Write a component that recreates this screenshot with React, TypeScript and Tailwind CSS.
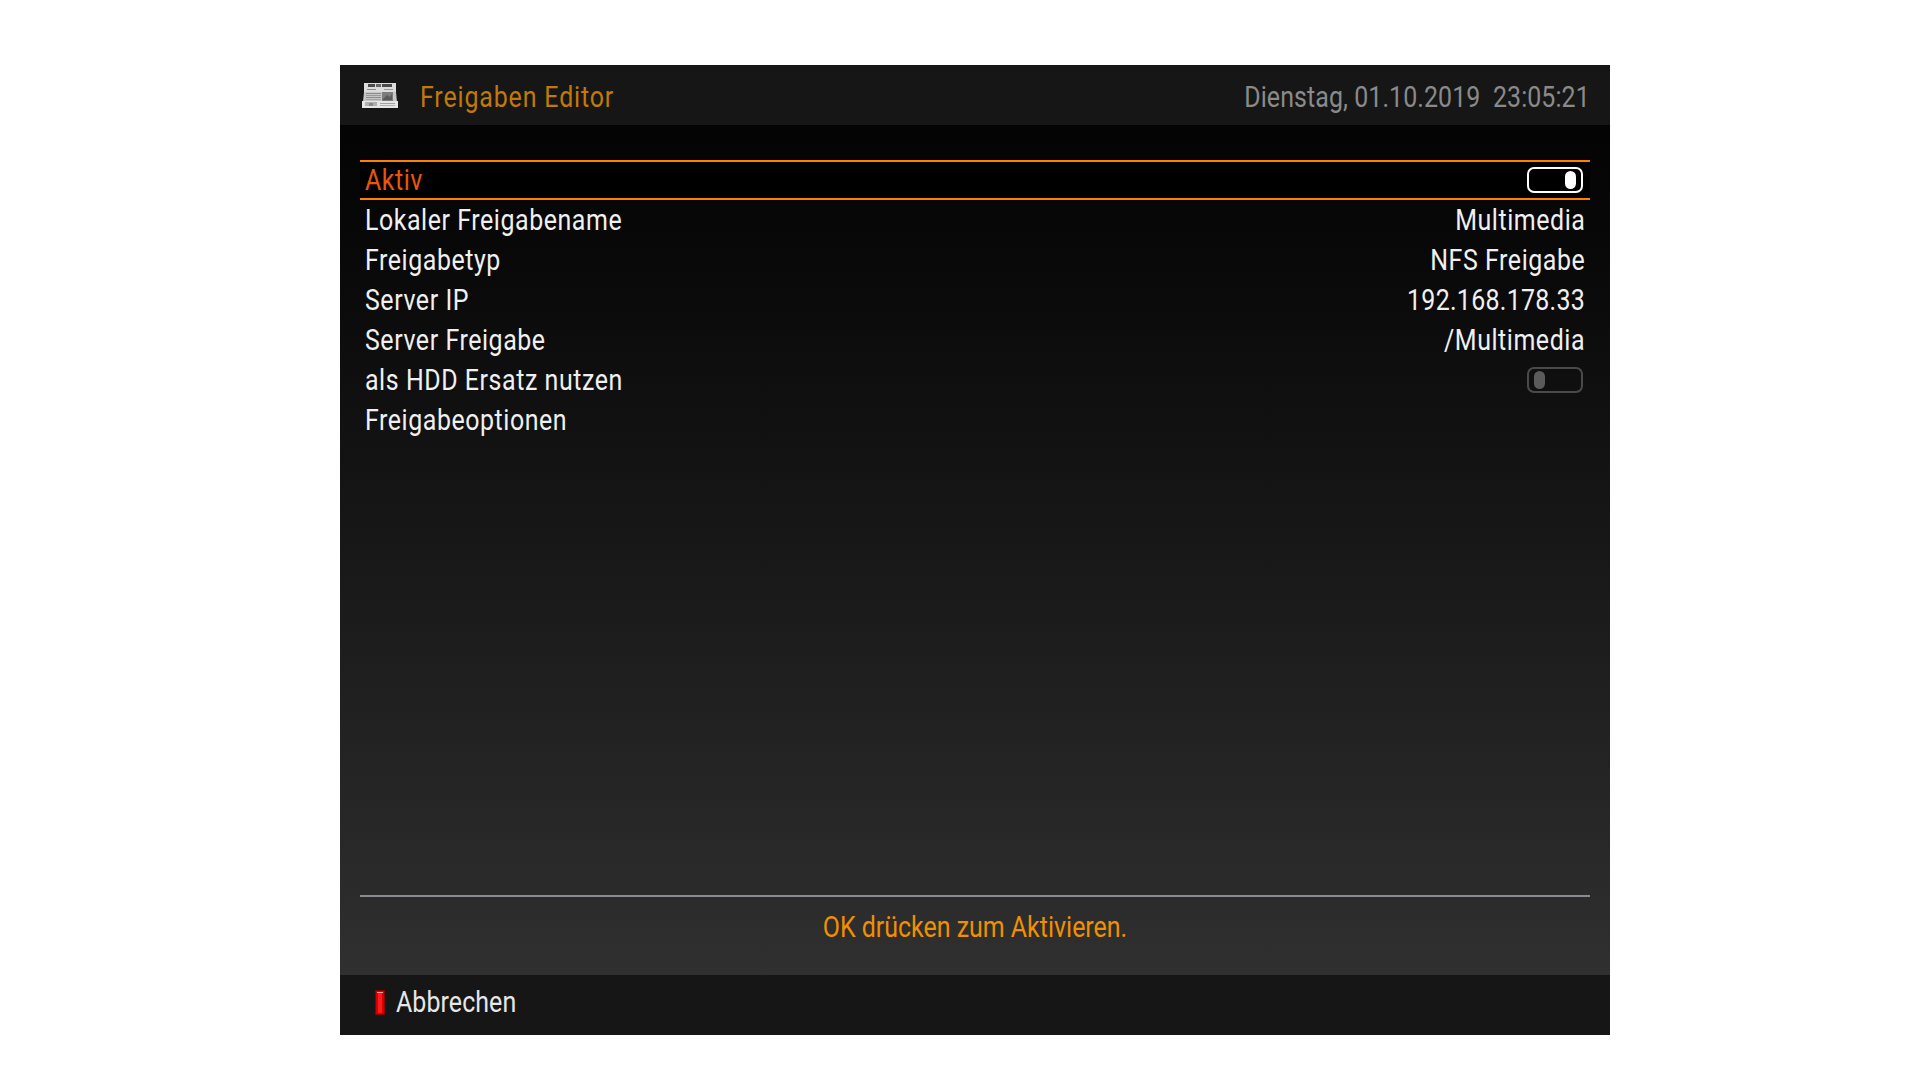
const font = "font-['Roboto',sans-serif]";

function Toggle({ on }: { on: boolean }) {
  return (
    <div className={`box-border flex h-[26px] w-[56px] items-center rounded-[7px] border-2 px-[5px] ${on ? "justify-end border-white" : "justify-start border-[#4a4a4a]"}`}>
      <div className={`h-[18px] w-[11px] rounded-[6px] ${on ? "bg-white" : "bg-[#5a5a5a]"}`} />
    </div>
  );
}

function Narrow({ children, right, className = "" }: { children: React.ReactNode; right?: boolean; className?: string }) {
  return (
    <span className={`inline-block whitespace-nowrap scale-x-[0.86] ${right ? "origin-right" : "origin-left"} ${className}`}>{children}</span>
  );
}

function Row({ label, value, toggle, active, tight }: { label: string; value?: string; toggle?: "on" | "off"; active?: boolean; tight?: boolean }) {
  return (
    <div className={`box-border flex h-[40px] items-center justify-between pl-[5px] ${toggle ? "pr-[7px]" : "pr-[5px]"} ${active ? "border-y-2 border-[#ff7f00] bg-black text-[#e8560a]" : "text-[#f0f0f0]"}`}>
      <Narrow className="translate-y-[1px]">{label}</Narrow>
      {value && <Narrow right className={`translate-y-[1px] ${tight ? "tracking-[0.35px]" : ""}`}>{value}</Narrow>}
      {toggle && <Toggle on={toggle === "on"} />}
    </div>
  );
}

function Paper() {
  return (
    <svg width="36" height="25" viewBox="0 0 36 25" className="block">
      <rect x="2" y="0" width="32" height="9" fill="#dcdcdc" />
      <rect x="6" y="1" width="7" height="3" fill="#4a4a4a" />
      <rect x="14" y="1" width="5" height="3" fill="#666" />
      <rect x="20" y="1" width="10" height="3" fill="#4a4a4a" />
      <rect x="5" y="6" width="9" height="1" fill="#888" />
      <rect x="22" y="6" width="9" height="1" fill="#999" />
      <polygon points="2,9 34,9 35,19 1,19" fill="#c6c6c6" />
      <rect x="4" y="10" width="15" height="1" fill="#8c8c8c" />
      <rect x="4" y="12" width="15" height="1" fill="#9a9a9a" />
      <rect x="4" y="14" width="15" height="1" fill="#8c8c8c" />
      <rect x="4" y="16" width="15" height="1" fill="#a4a4a4" />
      <rect x="20" y="9" width="11" height="9" fill="#7c7c7c" />
      <polygon points="21,16 25,12 28,14 30,11 30,17 21,17" fill="#5a5a5a" />
      <rect x="0" y="18" width="36" height="7" fill="#e6e6e6" />
      <rect x="3" y="19" width="12" height="4" fill="#b0b0b0" />
      <rect x="7" y="20" width="4" height="3" fill="#8a8a8a" />
      <rect x="18" y="20" width="15" height="1" fill="#a0a0a0" />
      <rect x="18" y="22" width="15" height="1" fill="#b0b0b0" />
    </svg>
  );
}

function RedKey() {
  return (
    <svg width="10" height="25" viewBox="0 0 10 25" className="block">
      <rect width="10" height="25" fill="#8a0000" />
      <rect x="1" y="1" width="8" height="23" fill="#d40000" />
      <rect x="3" y="2" width="4" height="21" fill="#ff1a1a" />
      <rect x="2" y="2" width="6" height="1" fill="#ff9a9a" />
    </svg>
  );
}

export default function App() {
  return (
    <div className={`flex h-[1080px] w-[1920px] justify-start bg-white pl-[340px] pt-[65px] ${font}`}>
      <div className="flex h-[970px] w-[1270px] flex-col text-[29px]">
        <header className="flex h-[60px] items-center justify-between bg-[#161616] pl-[22px] pr-[20px]">
          <div className="flex items-center gap-[22px]">
            <Paper />
            <Narrow className="translate-y-[2.5px] tracking-[1px] text-[#c0790a]">Freigaben Editor</Narrow>
          </div>
          <Narrow right className="translate-y-[2.5px] tracking-[0.1px] text-[#8a8a8a]">Dienstag, 01.10.2019&nbsp;&nbsp;23:05:21</Narrow>
        </header>
        <main className="flex flex-1 flex-col bg-gradient-to-b from-[#040404] to-[#303030] px-[20px] pt-[35px] tracking-[0.65px]">
          <div className="flex-1">
            <Row label="Aktiv" toggle="on" active />
            <Row label="Lokaler Freigabename" value="Multimedia" />
            <Row label="Freigabetyp" value="NFS Freigabe" />
            <Row label="Server IP" value="192.168.178.33" tight />
            <Row label="Server Freigabe" value="/Multimedia" />
            <Row label="als HDD Ersatz nutzen" toggle="off" />
            <Row label="Freigabeoptionen" />
          </div>
          <div className="h-[2px] bg-[#8a8a92]" />
          <div className="flex h-[78px] items-start justify-center pt-[9px] tracking-[0px] text-[#f09000]">
            <Narrow className="origin-center!">OK drücken zum Aktivieren.</Narrow>
          </div>
        </main>
        <footer className="flex h-[60px] items-center gap-[11px] bg-[#161616] pb-[5px] pl-[35px] tracking-[0.1px] text-[#e6e6e6]">
          <RedKey />
          <Narrow>Abbrechen</Narrow>
        </footer>
      </div>
    </div>
  );
}
